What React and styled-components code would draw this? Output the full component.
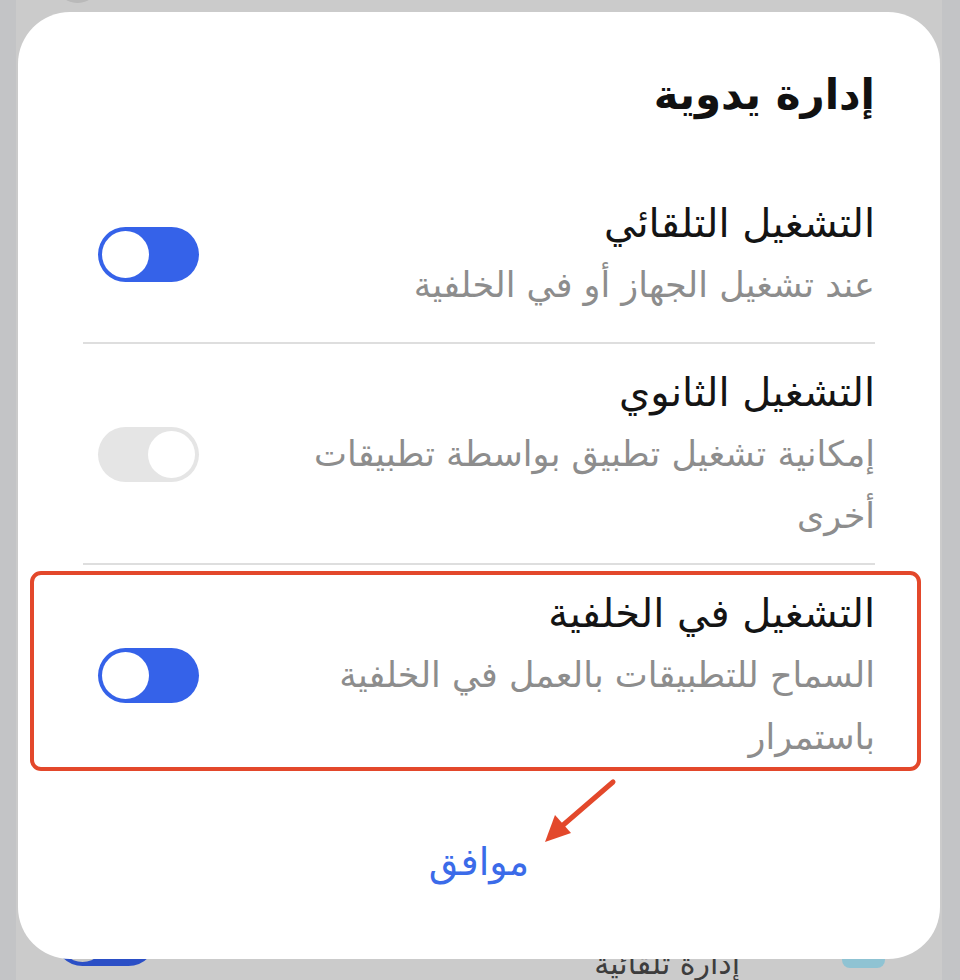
import styled, { createGlobalStyle } from "styled-components";

const GlobalStyle = createGlobalStyle`
  html, body {
    margin: 0;
    padding: 0;
    background: #c3c4c6;
  }
  body {
    font-family: "DejaVu Sans", "Noto Sans", sans-serif;
  }
`;

const Screen = styled.div`
  position: relative;
  width: 926px;
  height: 980px;
  margin-left: 16px;
  background: #cbcbcb;
  overflow: hidden;
  direction: rtl;
  display: flex;
  flex-direction: column;
`;

const PeekRow = styled.div`
  display: flex;
  align-items: ${(p) => (p.$top ? "flex-start" : "center")};
  height: ${(p) => p.$height}px;
  margin-top: ${(p) => p.$offset}px;
  padding: 0 37px 0 39px;
  gap: 20px;
`;

const Spacer = styled.div`
  flex: 1;
`;

const PeekText = styled.div`
  flex: 1;
  font-size: 30px;
  line-height: 34px;
  color: #3d3d3d;
  margin-top: ${(p) => p.$drop || 0}px;
  padding-right: ${(p) => p.$inset || 0}px;
`;

const PeekIcon = styled.div`
  width: 43px;
  height: 43px;
  border-radius: 8px;
  background: #8fc3d3;
  margin-top: 14px;
  margin-right: 20px;
`;

const Dialog = styled.div`
  position: absolute;
  top: 12px;
  left: 2px;
  right: 2px;
  background: #fff;
  border-radius: 52px;
  padding: 53px 65px 67px;
`;

const DialogTitle = styled.h2`
  margin: 0 0 50px;
  font-size: 42px;
  line-height: 60px;
  font-weight: 700;
  color: #111;
`;

const List = styled.div`
  display: flex;
  flex-direction: column;
`;

const Row = styled.div`
  position: relative;
  display: flex;
  align-items: center;
  padding: 17px 0 ${(p) => (p.$single ? 26 : 16)}px;
  border-bottom: ${(p) => (p.$last ? "none" : "2px solid #dedede")};
`;

const TextBlock = styled.div`
  flex: 1;
  min-width: 0;
`;

const RowTitle = styled.div`
  font-size: 40px;
  line-height: 62px;
  font-weight: 400;
  color: #141414;
  white-space: nowrap;
`;

const RowSubtitle = styled.div`
  font-size: 35px;
  line-height: 62px;
  color: #8d8d8d;
  white-space: nowrap;
`;

const Switch = styled.div`
  flex: none;
  width: 101px;
  height: 55px;
  margin-left: 15px;
  border-radius: 28px;
  background: ${(p) => (p.$on ? "#3562e9" : "#e5e5e5")};
  display: flex;
  align-items: center;
  justify-content: ${(p) => (p.$on ? "flex-end" : "flex-start")};
  padding: 0 4px;
  box-sizing: border-box;
`;

const Knob = styled.span`
  width: 47px;
  height: 47px;
  border-radius: 50%;
  background: #fff;
`;

const PeekSwitch = styled(Switch)`
  background: ${(p) => (p.$on ? "#2b4fc6" : "#b9b9b9")};
  margin-left: 0;
`;

const PeekKnob = styled(Knob)`
  background: ${(p) => (p.$on ? "#cbcbcb" : "#c6c6c6")};
`;

const Highlight = styled.div`
  position: absolute;
  top: 6px;
  bottom: 13px;
  left: -53px;
  right: -46px;
  border: 4px solid #e3482b;
  border-radius: 11px;
  pointer-events: none;
`;

const Footer = styled.div`
  display: flex;
  justify-content: center;
  margin-top: 48px;
`;

const OkButton = styled.button`
  border: none;
  background: none;
  padding: 0;
  font-family: inherit;
  font-size: 38px;
  line-height: 60px;
  font-weight: 400;
  color: #3b6be9;
`;

const Arrow = styled.svg`
  position: absolute;
  left: 510px;
  top: 758px;
  overflow: visible;
`;

const rows = [
  {
    title: "التشغيل التلقائي",
    lines: ["عند تشغيل الجهاز أو في الخلفية"],
    on: true,
  },
  {
    title: "التشغيل الثانوي",
    lines: ["إمكانية تشغيل تطبيق بواسطة تطبيقات", "أخرى"],
    on: false,
  },
  {
    title: "التشغيل في الخلفية",
    lines: ["السماح للتطبيقات بالعمل في الخلفية", "باستمرار"],
    on: true,
    marked: true,
  },
];

export default function App() {
  return (
    <>
      <GlobalStyle />
      <Screen>
        <PeekRow $offset={-55} $height={60}>
          <PeekText>إدارة يدوية</PeekText>
          <PeekSwitch $on={false} style={{ width: 45 }}>
            <PeekKnob />
          </PeekSwitch>
        </PeekRow>
        <Spacer />
        <PeekRow $offset={0} $height={69} $top>
          <PeekIcon />
          <PeekText $drop={36} $inset={82}>إدارة تلقائية</PeekText>
          <PeekSwitch $on>
            <PeekKnob />
          </PeekSwitch>
        </PeekRow>

        <Dialog>
          <DialogTitle>إدارة يدوية</DialogTitle>
          <List>
            {rows.map((row, i) => (
              <Row
                key={row.title}
                $last={i === rows.length - 1}
                $single={row.lines.length === 1}
              >
                <TextBlock>
                  <RowTitle>{row.title}</RowTitle>
                  {row.lines.map((line) => (
                    <RowSubtitle key={line}>{line}</RowSubtitle>
                  ))}
                </TextBlock>
                <Switch $on={row.on}>
                  <Knob />
                </Switch>
                {row.marked && <Highlight />}
              </Row>
            ))}
          </List>
          <Footer>
            <OkButton>موافق</OkButton>
          </Footer>
          <Arrow width="90" height="80" viewBox="0 0 90 80">
            <line x1="85" y1="12" x2="34" y2="56" stroke="#e3482b" strokeWidth="5" strokeLinecap="round" />
            <polygon points="17,72 43,63 27,45" fill="#e3482b" />
          </Arrow>
        </Dialog>
      </Screen>
    </>
  );
}
